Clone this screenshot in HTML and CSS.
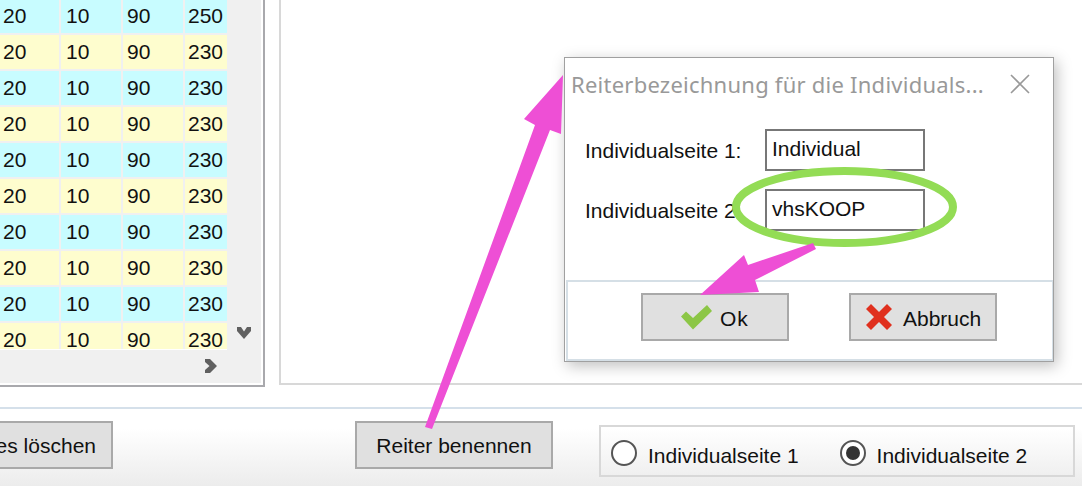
FILE: index.html
```html
<!DOCTYPE html>
<html lang="de">
<head>
<meta charset="utf-8">
<title>Reiter benennen</title>
<link rel="stylesheet" href="styles.css">
</head>
<body>
<div class="window">
  <main class="main">
    <section class="grid-panel">
      <div class="grid-inner">
        <div class="grid-clip">
          <div class="grid">
            <div class="cell blue">20</div><div class="cell blue">10</div><div class="cell blue">90</div><div class="cell blue">250</div>
            <div class="cell yellow">20</div><div class="cell yellow">10</div><div class="cell yellow">90</div><div class="cell yellow">230</div>
            <div class="cell blue">20</div><div class="cell blue">10</div><div class="cell blue">90</div><div class="cell blue">230</div>
            <div class="cell yellow">20</div><div class="cell yellow">10</div><div class="cell yellow">90</div><div class="cell yellow">230</div>
            <div class="cell blue">20</div><div class="cell blue">10</div><div class="cell blue">90</div><div class="cell blue">230</div>
            <div class="cell yellow">20</div><div class="cell yellow">10</div><div class="cell yellow">90</div><div class="cell yellow">230</div>
            <div class="cell blue">20</div><div class="cell blue">10</div><div class="cell blue">90</div><div class="cell blue">230</div>
            <div class="cell yellow">20</div><div class="cell yellow">10</div><div class="cell yellow">90</div><div class="cell yellow">230</div>
            <div class="cell blue">20</div><div class="cell blue">10</div><div class="cell blue">90</div><div class="cell blue">230</div>
            <div class="cell yellow">20</div><div class="cell yellow">10</div><div class="cell yellow">90</div><div class="cell yellow">230</div>
          </div>
        </div>
        <div class="vscroll">
          <svg class="chev-down" width="14" height="12" viewBox="0 0 14 12"><path d="M0 0L4 0L7 4.500L10 0L14 0L14 4L7 12L0 4Z" fill="#606060"/></svg>
        </div>
        <div class="hscroll">
          <svg class="chev-right" width="12" height="14" viewBox="0 0 12 14"><path d="M0 0L5 0L12 7L5 14L0 14L0 11L4.500 7L0 3Z" fill="#606060"/></svg>
        </div>
      </div>
    </section>
    <section class="right-panel"></section>
  </main>
  <footer class="footer">
    <button class="btn btn-delete" type="button">es löschen</button>
    <button class="btn btn-name" type="button">Reiter benennen</button>
    <div class="radio-group">
      <label class="radio-item"><span class="radio"></span><span class="radio-text">Individualseite 1</span></label>
      <label class="radio-item"><span class="radio checked"></span><span class="radio-text">Individualseite 2</span></label>
    </div>
  </footer>
</div>

<div class="dialog">
  <header class="dialog-head">
    <span class="dialog-title">Reiterbezeichnung für die Individuals...</span>
    <svg class="close" width="20" height="20" viewBox="0 0 20 20"><path d="M1 1L19 19M19 1L1 19" stroke="#999" stroke-width="1.6" fill="none"/></svg>
  </header>
  <div class="dialog-body">
    <div class="field"><span class="field-label">Individualseite 1:</span><div class="input">Individual</div></div>
    <div class="field"><span class="field-label">Individualseite 2:</span><div class="input">vhsKOOP</div></div>
  </div>
  <div class="dialog-actions">
    <button class="btn btn-dialog btn-ok" type="button">
      <svg class="btn-icon" width="32" height="25" viewBox="0 0 32 25"><path d="M0 11.500L5 6.500L12 13L26 0L31 6L12 24.500Z" fill="#8cc646"/></svg><span class="btn-text">Ok</span>
    </button>
    <button class="btn btn-dialog btn-cancel" type="button">
      <svg class="btn-icon" width="26" height="26" viewBox="0 0 26 26"><path d="M0 5L5 0L13 8L21 0L26 5L18 13L26 21L21 26L13 18L5 26L0 21L8 13Z" fill="#e0301e"/></svg><span class="btn-text">Abbruch</span>
    </button>
  </div>
</div>

<svg class="annotations" width="1082" height="486" viewBox="0 0 1082 486">
  <ellipse cx="844.500" cy="207" rx="108.500" ry="36" fill="none" stroke="#93dc55" stroke-width="8"/>
  <polygon points="425,427 432,429 550,130 561,134 563,75 524,119 535,125" fill="#ee4fd5"/>
  <polygon points="700,295 744,255 748,265 813,243 816,249 755,280 759,292" fill="#ee4fd5"/>
</svg>
</body>
</html>
```
FILE: styles.css
```css
* { box-sizing: border-box; }
html, body { margin: 0; padding: 0; }
body {
  width: 1082px;
  height: 486px;
  overflow: hidden;
  position: relative;
  background: #fff;
  font-family: "Liberation Sans", Arial, sans-serif;
  font-size: 21px;
  color: #111;
}
.window { display: flex; flex-direction: column; height: 486px; }
.main { display: flex; height: 409px; border-bottom: 2px solid #d5e0ea; flex: none; }

.grid-panel {
  width: 265px;
  height: 387px;
  flex: none;
  border-right: 2px solid #a9a9ad;
  border-bottom: 2px solid #a9a9ad;
}
.grid-inner {
  display: grid;
  grid-template-columns: 227px 34px;
  grid-template-rows: 349px 34px;
  height: 385px;
  width: 263px;
  background: #f0f0f0;
  border-right: 2px solid #fff;
  border-bottom: 2px solid #fff;
}
.grid-clip { overflow: hidden; background: #f0f0f0; }
.grid {
  display: grid;
  grid-template-columns: 59px 60px 60px 42px;
  grid-auto-rows: 34px;
  gap: 2px;
  margin-top: -1px;
}
.cell { padding-left: 3px; line-height: 34px; white-space: nowrap; overflow: hidden; }
.cell:nth-child(4n+2) { padding-left: 5px; }
.cell:nth-child(4n+3) { padding-left: 4px; }
.blue { background: #c8fcff; }
.yellow { background: #fefdce; }
.vscroll { display: flex; justify-content: center; align-items: flex-end; padding: 0 0 10px 0; }
.chev-down { display: block; }
.hscroll {
  grid-column: 1 / 3;
  display: flex;
  align-items: flex-start;
  border-top: 1px solid #fff;
  width: 227px;
  padding: 9px 10px 0 0;
  justify-content: flex-end;
}
.chev-right { display: block; }

.right-panel {
  flex: 1;
  height: 385px;
  margin-left: 14px;
  border-left: 2px solid #d8d8d8;
  border-bottom: 2px solid #d8d8d8;
}

.footer {
  flex: 1;
  display: flex;
  align-items: flex-start;
  padding-top: 12px;
  background: linear-gradient(#fff 0%, #fff 25%, #ececec 100%);
}
.btn {
  display: flex;
  align-items: center;
  justify-content: center;
  height: 48px;
  background: #e0e0e0;
  border: 2px solid #a9a9a9;
  font: inherit;
  color: inherit;
  padding: 2px 0 0;
  white-space: nowrap;
}
.btn-delete { width: 115px; margin-left: -2px; justify-content: flex-end; padding-right: 15px; }
.btn-name { width: 198px; margin-left: 242px; }
.radio-group {
  display: flex;
  align-items: center;
  width: 476px;
  height: 52px;
  margin: 4px 0 0 46px;
  padding: 4px 0 0 10px;
  border: 2px solid #d8d8d8;
  gap: 41px;
}
.radio-item { display: flex; align-items: center; gap: 11px; }
.radio-text { padding-top: 6px; }
.radio {
  display: flex;
  align-items: center;
  justify-content: center;
  width: 26px;
  height: 26px;
  border: 2px solid #555;
  border-radius: 50%;
  background: #fff;
}
.radio.checked::before {
  content: "";
  width: 14px;
  height: 14px;
  border-radius: 50%;
  background: #333;
}

.dialog {
  position: absolute;
  left: 564px;
  top: 57px;
  width: 490px;
  height: 305px;
  display: flex;
  flex-direction: column;
  background: #fff;
  border: 1px solid #a0a0a0;
  box-shadow: 3px 4px 14px rgba(0, 0, 0, .25);
}
.dialog-head {
  display: flex;
  align-items: center;
  justify-content: space-between;
  height: 54px;
  padding: 0 23px 0 6px;
}
.dialog-title {
  font-family: "Noto Sans", sans-serif;
  font-size: 22px;
  letter-spacing: .24px;
  color: #999;
  white-space: nowrap;
  margin-top: -2px;
}
.close { display: block; margin-top: -3px; }
.dialog-body {
  flex: 1;
  display: flex;
  flex-direction: column;
  gap: 18px;
  padding: 17px 128px 0 20px;
}
.field { display: flex; align-items: center; justify-content: space-between; }
.field-label { padding-top: 2px; }
.input {
  width: 160px;
  height: 42px;
  border: 2px solid #777;
  padding: 0 5px;
  line-height: 36px;
  background: #fff;
}
.dialog-actions {
  display: flex;
  gap: 60px;
  height: 81px;
  margin-left: 1px;
  padding: 11px 0 0 73px;
  border: 2px solid #d5dfe6;
  border-right-width: 1px;
}
.btn-dialog { width: 148px; justify-content: flex-start; padding-top: 0; }
.btn-ok { gap: 7px; padding-left: 38px; letter-spacing: .8px; }
.btn-cancel { gap: 11px; padding-left: 15px; }
.btn-text { padding-top: 4px; }
.btn-icon { display: block; flex: none; }

.annotations {
  position: absolute;
  left: 0;
  top: 0;
  pointer-events: none;
}
```
